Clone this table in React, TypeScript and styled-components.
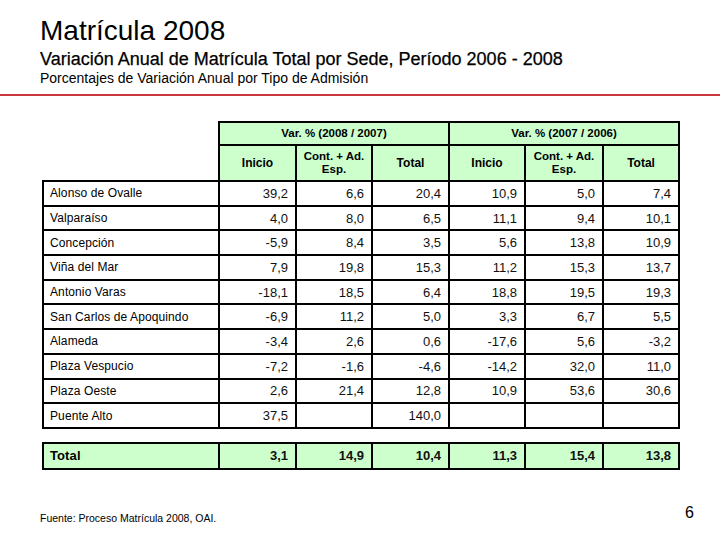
import React from "react";
import styled, { createGlobalStyle } from "styled-components";

const Global = createGlobalStyle`
  html, body { margin: 0; padding: 0; background: #fff; }
  body { font-family: "Liberation Sans", Arial, sans-serif; color: #000; }
`;

const Page = styled.div`
  width: 720px;
  height: 540px;
  display: flex;
  flex-direction: column;
  box-sizing: border-box;
  overflow: hidden;
`;

const Header = styled.header`
  padding: 12px 0 0 40px;
  display: flex;
  flex-direction: column;
`;

const Title = styled.h1`
  margin: 0;
  font-size: 28px;
  font-weight: normal;
  line-height: 38px;
`;

const Subtitle = styled.h2`
  margin: 0;
  font-size: 18px;
  font-weight: normal;
  line-height: 19px;
  -webkit-text-stroke: 0.25px #000;
`;

const Caption = styled.p`
  margin: 0;
  font-size: 14px;
  line-height: 18px;
`;

const Rule = styled.hr`
  margin: 7px 0 0 0;
  border: none;
  height: 2px;
  background: #c8383c;
`;

const Table = styled.table<{ $top: number }>`
  border-collapse: collapse;
  table-layout: fixed;
  width: 636px;
  margin: ${(p) => p.$top}px 0 0 42px;
  font-family: "Liberation Sans", Arial, sans-serif;
`;

const HeadCell = styled.th<{ $h: number; $small?: boolean }>`
  background: #ccffcc;
  border: 2px solid #000;
  height: ${(p) => p.$h}px;
  padding: 0;
  font-weight: bold;
  font-size: ${(p) => (p.$small ? 11.5 : 12)}px;
  line-height: 13px;
  text-align: center;
  vertical-align: middle;
`;

const Blank = styled.th`
  border: none;
  padding: 0;
`;

const LabelCell = styled.td<{ $total?: boolean }>`
  border: 2px solid #000;
  height: ${(p) => (p.$total ? 24 : 22.7)}px;
  padding: 0 0 0 6px;
  font-size: ${(p) => (p.$total ? 13 : 12)}px;
  font-weight: ${(p) => (p.$total ? "bold" : "normal")};
  background: ${(p) => (p.$total ? "#ccffcc" : "#fff")};
  white-space: nowrap;
  vertical-align: middle;
  letter-spacing: 0.1px;
`;

const NumCell = styled.td<{ $total?: boolean }>`
  border: 2px solid #000;
  padding: 0 7px 0 0;
  font-size: 13px;
  font-weight: ${(p) => (p.$total ? "bold" : "normal")};
  background: ${(p) => (p.$total ? "#ccffcc" : "#fff")};
  text-align: right;
  vertical-align: middle;
  color: #111;
`;

const Footer = styled.footer`
  margin-top: auto;
  display: flex;
  justify-content: space-between;
  align-items: flex-end;
  padding: 0 26px 16px 40px;
`;

const Source = styled.span`
  font-size: 10.5px;
  line-height: 12px;
`;

const PageNum = styled.span`
  font-size: 16px;
  line-height: 18px;
  margin-bottom: 2px;
`;

const widths = [176, 77, 76, 77, 76, 78, 76];

const rows: [string, ...string[]][] = [
  ["Alonso de Ovalle", "39,2", "6,6", "20,4", "10,9", "5,0", "7,4"],
  ["Valparaíso", "4,0", "8,0", "6,5", "11,1", "9,4", "10,1"],
  ["Concepción", "-5,9", "8,4", "3,5", "5,6", "13,8", "10,9"],
  ["Viña del Mar", "7,9", "19,8", "15,3", "11,2", "15,3", "13,7"],
  ["Antonio Varas", "-18,1", "18,5", "6,4", "18,8", "19,5", "19,3"],
  ["San Carlos de Apoquindo", "-6,9", "11,2", "5,0", "3,3", "6,7", "5,5"],
  ["Alameda", "-3,4", "2,6", "0,6", "-17,6", "5,6", "-3,2"],
  ["Plaza Vespucio", "-7,2", "-1,6", "-4,6", "-14,2", "32,0", "11,0"],
  ["Plaza Oeste", "2,6", "21,4", "12,8", "10,9", "53,6", "30,6"],
  ["Puente Alto", "37,5", "", "140,0", "", "", ""],
];

const total = ["Total", "3,1", "14,9", "10,4", "11,3", "15,4", "13,8"];

const Cols = () => (
  <colgroup>
    {widths.map((w, i) => (
      <col key={i} style={{ width: w }} />
    ))}
  </colgroup>
);

export default function App() {
  return (
    <Page>
      <Global />
      <Header>
        <Title>Matrícula 2008</Title>
        <Subtitle>Variación Anual de Matrícula Total por Sede, Período 2006 - 2008</Subtitle>
        <Caption>Porcentajes de Variación Anual por Tipo de Admisión</Caption>
      </Header>
      <Rule />
      <Table $top={25}>
        <Cols />
        <thead>
          <tr>
            <Blank />
            <HeadCell $h={21} colSpan={3} $small>
              Var. % (2008 / 2007)
            </HeadCell>
            <HeadCell $h={21} colSpan={3} $small>
              Var. % (2007 / 2006)
            </HeadCell>
          </tr>
          <tr>
            <Blank />
            <HeadCell $h={34}>Inicio</HeadCell>
            <HeadCell $h={34} $small>
              Cont. + Ad.
              <br />
              Esp.
            </HeadCell>
            <HeadCell $h={34}>Total</HeadCell>
            <HeadCell $h={34}>Inicio</HeadCell>
            <HeadCell $h={34} $small>
              Cont. + Ad.
              <br />
              Esp.
            </HeadCell>
            <HeadCell $h={34}>Total</HeadCell>
          </tr>
        </thead>
        <tbody>
          {rows.map(([label, ...vals]) => (
            <tr key={label}>
              <LabelCell>{label}</LabelCell>
              {vals.map((v, i) => (
                <NumCell key={i}>{v}</NumCell>
              ))}
            </tr>
          ))}
        </tbody>
      </Table>
      <Table $top={13}>
        <Cols />
        <tbody>
          <tr>
            <LabelCell $total>{total[0]}</LabelCell>
            {total.slice(1).map((v, i) => (
              <NumCell $total key={i}>
                {v}
              </NumCell>
            ))}
          </tr>
        </tbody>
      </Table>
      <Footer>
        <Source>Fuente: Proceso Matrícula 2008, OAI.</Source>
        <PageNum>6</PageNum>
      </Footer>
    </Page>
  );
}
